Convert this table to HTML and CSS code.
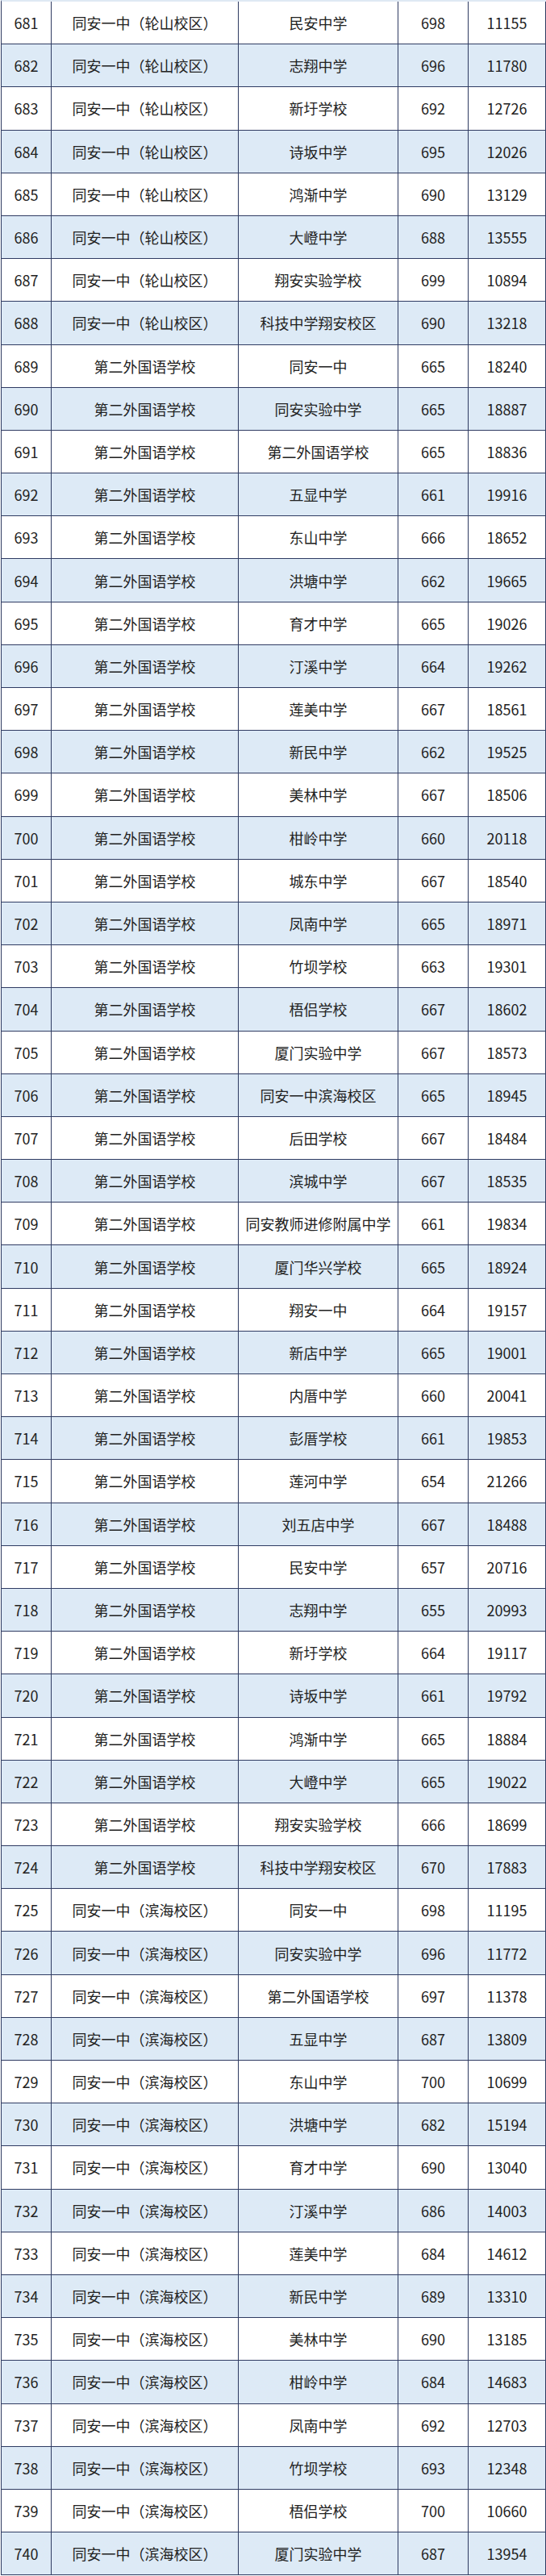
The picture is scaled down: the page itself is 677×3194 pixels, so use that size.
FILE: index.html
```html
<!DOCTYPE html>
<html lang="zh-CN">
<head>
<meta charset="utf-8">
<title>录取分数表</title>
<link rel="stylesheet" href="styles.css">
</head>
<body>
<div class="table">
<div class="row"><div class="c">681</div><div class="c">同安一中（轮山校区）</div><div class="c">民安中学</div><div class="c">698</div><div class="c">11155</div></div>
<div class="row"><div class="c">682</div><div class="c">同安一中（轮山校区）</div><div class="c">志翔中学</div><div class="c">696</div><div class="c">11780</div></div>
<div class="row"><div class="c">683</div><div class="c">同安一中（轮山校区）</div><div class="c">新圩学校</div><div class="c">692</div><div class="c">12726</div></div>
<div class="row"><div class="c">684</div><div class="c">同安一中（轮山校区）</div><div class="c">诗坂中学</div><div class="c">695</div><div class="c">12026</div></div>
<div class="row"><div class="c">685</div><div class="c">同安一中（轮山校区）</div><div class="c">鸿渐中学</div><div class="c">690</div><div class="c">13129</div></div>
<div class="row"><div class="c">686</div><div class="c">同安一中（轮山校区）</div><div class="c">大嶝中学</div><div class="c">688</div><div class="c">13555</div></div>
<div class="row"><div class="c">687</div><div class="c">同安一中（轮山校区）</div><div class="c">翔安实验学校</div><div class="c">699</div><div class="c">10894</div></div>
<div class="row"><div class="c">688</div><div class="c">同安一中（轮山校区）</div><div class="c">科技中学翔安校区</div><div class="c">690</div><div class="c">13218</div></div>
<div class="row"><div class="c">689</div><div class="c">第二外国语学校</div><div class="c">同安一中</div><div class="c">665</div><div class="c">18240</div></div>
<div class="row"><div class="c">690</div><div class="c">第二外国语学校</div><div class="c">同安实验中学</div><div class="c">665</div><div class="c">18887</div></div>
<div class="row"><div class="c">691</div><div class="c">第二外国语学校</div><div class="c">第二外国语学校</div><div class="c">665</div><div class="c">18836</div></div>
<div class="row"><div class="c">692</div><div class="c">第二外国语学校</div><div class="c">五显中学</div><div class="c">661</div><div class="c">19916</div></div>
<div class="row"><div class="c">693</div><div class="c">第二外国语学校</div><div class="c">东山中学</div><div class="c">666</div><div class="c">18652</div></div>
<div class="row"><div class="c">694</div><div class="c">第二外国语学校</div><div class="c">洪塘中学</div><div class="c">662</div><div class="c">19665</div></div>
<div class="row"><div class="c">695</div><div class="c">第二外国语学校</div><div class="c">育才中学</div><div class="c">665</div><div class="c">19026</div></div>
<div class="row"><div class="c">696</div><div class="c">第二外国语学校</div><div class="c">汀溪中学</div><div class="c">664</div><div class="c">19262</div></div>
<div class="row"><div class="c">697</div><div class="c">第二外国语学校</div><div class="c">莲美中学</div><div class="c">667</div><div class="c">18561</div></div>
<div class="row"><div class="c">698</div><div class="c">第二外国语学校</div><div class="c">新民中学</div><div class="c">662</div><div class="c">19525</div></div>
<div class="row"><div class="c">699</div><div class="c">第二外国语学校</div><div class="c">美林中学</div><div class="c">667</div><div class="c">18506</div></div>
<div class="row"><div class="c">700</div><div class="c">第二外国语学校</div><div class="c">柑岭中学</div><div class="c">660</div><div class="c">20118</div></div>
<div class="row"><div class="c">701</div><div class="c">第二外国语学校</div><div class="c">城东中学</div><div class="c">667</div><div class="c">18540</div></div>
<div class="row"><div class="c">702</div><div class="c">第二外国语学校</div><div class="c">凤南中学</div><div class="c">665</div><div class="c">18971</div></div>
<div class="row"><div class="c">703</div><div class="c">第二外国语学校</div><div class="c">竹坝学校</div><div class="c">663</div><div class="c">19301</div></div>
<div class="row"><div class="c">704</div><div class="c">第二外国语学校</div><div class="c">梧侣学校</div><div class="c">667</div><div class="c">18602</div></div>
<div class="row"><div class="c">705</div><div class="c">第二外国语学校</div><div class="c">厦门实验中学</div><div class="c">667</div><div class="c">18573</div></div>
<div class="row"><div class="c">706</div><div class="c">第二外国语学校</div><div class="c">同安一中滨海校区</div><div class="c">665</div><div class="c">18945</div></div>
<div class="row"><div class="c">707</div><div class="c">第二外国语学校</div><div class="c">后田学校</div><div class="c">667</div><div class="c">18484</div></div>
<div class="row"><div class="c">708</div><div class="c">第二外国语学校</div><div class="c">滨城中学</div><div class="c">667</div><div class="c">18535</div></div>
<div class="row"><div class="c">709</div><div class="c">第二外国语学校</div><div class="c">同安教师进修附属中学</div><div class="c">661</div><div class="c">19834</div></div>
<div class="row"><div class="c">710</div><div class="c">第二外国语学校</div><div class="c">厦门华兴学校</div><div class="c">665</div><div class="c">18924</div></div>
<div class="row"><div class="c">711</div><div class="c">第二外国语学校</div><div class="c">翔安一中</div><div class="c">664</div><div class="c">19157</div></div>
<div class="row"><div class="c">712</div><div class="c">第二外国语学校</div><div class="c">新店中学</div><div class="c">665</div><div class="c">19001</div></div>
<div class="row"><div class="c">713</div><div class="c">第二外国语学校</div><div class="c">内厝中学</div><div class="c">660</div><div class="c">20041</div></div>
<div class="row"><div class="c">714</div><div class="c">第二外国语学校</div><div class="c">彭厝学校</div><div class="c">661</div><div class="c">19853</div></div>
<div class="row"><div class="c">715</div><div class="c">第二外国语学校</div><div class="c">莲河中学</div><div class="c">654</div><div class="c">21266</div></div>
<div class="row"><div class="c">716</div><div class="c">第二外国语学校</div><div class="c">刘五店中学</div><div class="c">667</div><div class="c">18488</div></div>
<div class="row"><div class="c">717</div><div class="c">第二外国语学校</div><div class="c">民安中学</div><div class="c">657</div><div class="c">20716</div></div>
<div class="row"><div class="c">718</div><div class="c">第二外国语学校</div><div class="c">志翔中学</div><div class="c">655</div><div class="c">20993</div></div>
<div class="row"><div class="c">719</div><div class="c">第二外国语学校</div><div class="c">新圩学校</div><div class="c">664</div><div class="c">19117</div></div>
<div class="row"><div class="c">720</div><div class="c">第二外国语学校</div><div class="c">诗坂中学</div><div class="c">661</div><div class="c">19792</div></div>
<div class="row"><div class="c">721</div><div class="c">第二外国语学校</div><div class="c">鸿渐中学</div><div class="c">665</div><div class="c">18884</div></div>
<div class="row"><div class="c">722</div><div class="c">第二外国语学校</div><div class="c">大嶝中学</div><div class="c">665</div><div class="c">19022</div></div>
<div class="row"><div class="c">723</div><div class="c">第二外国语学校</div><div class="c">翔安实验学校</div><div class="c">666</div><div class="c">18699</div></div>
<div class="row"><div class="c">724</div><div class="c">第二外国语学校</div><div class="c">科技中学翔安校区</div><div class="c">670</div><div class="c">17883</div></div>
<div class="row"><div class="c">725</div><div class="c">同安一中（滨海校区）</div><div class="c">同安一中</div><div class="c">698</div><div class="c">11195</div></div>
<div class="row"><div class="c">726</div><div class="c">同安一中（滨海校区）</div><div class="c">同安实验中学</div><div class="c">696</div><div class="c">11772</div></div>
<div class="row"><div class="c">727</div><div class="c">同安一中（滨海校区）</div><div class="c">第二外国语学校</div><div class="c">697</div><div class="c">11378</div></div>
<div class="row"><div class="c">728</div><div class="c">同安一中（滨海校区）</div><div class="c">五显中学</div><div class="c">687</div><div class="c">13809</div></div>
<div class="row"><div class="c">729</div><div class="c">同安一中（滨海校区）</div><div class="c">东山中学</div><div class="c">700</div><div class="c">10699</div></div>
<div class="row"><div class="c">730</div><div class="c">同安一中（滨海校区）</div><div class="c">洪塘中学</div><div class="c">682</div><div class="c">15194</div></div>
<div class="row"><div class="c">731</div><div class="c">同安一中（滨海校区）</div><div class="c">育才中学</div><div class="c">690</div><div class="c">13040</div></div>
<div class="row"><div class="c">732</div><div class="c">同安一中（滨海校区）</div><div class="c">汀溪中学</div><div class="c">686</div><div class="c">14003</div></div>
<div class="row"><div class="c">733</div><div class="c">同安一中（滨海校区）</div><div class="c">莲美中学</div><div class="c">684</div><div class="c">14612</div></div>
<div class="row"><div class="c">734</div><div class="c">同安一中（滨海校区）</div><div class="c">新民中学</div><div class="c">689</div><div class="c">13310</div></div>
<div class="row"><div class="c">735</div><div class="c">同安一中（滨海校区）</div><div class="c">美林中学</div><div class="c">690</div><div class="c">13185</div></div>
<div class="row"><div class="c">736</div><div class="c">同安一中（滨海校区）</div><div class="c">柑岭中学</div><div class="c">684</div><div class="c">14683</div></div>
<div class="row"><div class="c">737</div><div class="c">同安一中（滨海校区）</div><div class="c">凤南中学</div><div class="c">692</div><div class="c">12703</div></div>
<div class="row"><div class="c">738</div><div class="c">同安一中（滨海校区）</div><div class="c">竹坝学校</div><div class="c">693</div><div class="c">12348</div></div>
<div class="row"><div class="c">739</div><div class="c">同安一中（滨海校区）</div><div class="c">梧侣学校</div><div class="c">700</div><div class="c">10660</div></div>
<div class="row"><div class="c">740</div><div class="c">同安一中（滨海校区）</div><div class="c">厦门实验中学</div><div class="c">687</div><div class="c">13954</div></div>
</div>
</body>
</html>
```

FILE: styles.css
```css
html, body {
  margin: 0;
  padding: 0;
  background: #ffffff;
}

.table {
  margin-left: 1px;
  width: 676px;
  border-left: 1px solid #2f3b62;
  border-top: 2px solid #dfe9f4;
  box-sizing: border-box;
  font-family: "Noto Sans CJK SC", "Noto Sans", sans-serif;
  font-size: 18px;
  color: #222222;
}

.row {
  display: grid;
  grid-template-columns: 62px 232px 198px 87px 96px;
  height: 53.2px;
}

.row:nth-child(even) {
  background: #ddeaf6;
}

.c {
  display: flex;
  align-items: center;
  justify-content: center;
  border-right: 1px solid #2f3b62;
  border-bottom: 1px solid #2f3b62;
  white-space: nowrap;
  line-height: 1;
}
```
